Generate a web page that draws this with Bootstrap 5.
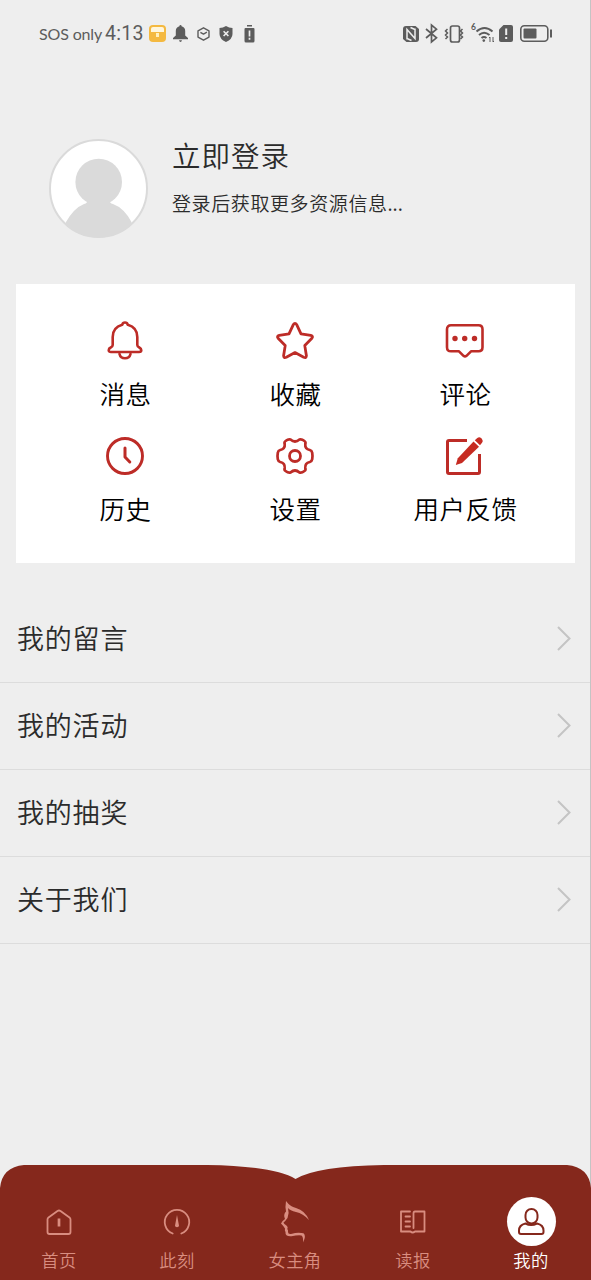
<!DOCTYPE html>
<html lang="zh-CN">
<head>
<meta charset="utf-8">
<meta name="viewport" content="width=device-width, initial-scale=1">
<title>我的</title>
<link href="https://cdn.jsdelivr.net/npm/bootstrap@5.3.0/dist/css/bootstrap.min.css" rel="stylesheet">
<style>
body{background:#eee;font-family:"Noto Sans CJK SC",sans-serif;font-weight:350;color:#2b2b2b}
svg{display:block;flex:none;overflow:visible}
.screen{height:1280px;border-right:1px solid #c4c4c4}
.statusbar{height:67px;padding:0 38px 0 39px;color:#5c5c5c;font-family:Lato,sans-serif;font-weight:400}
.sos{width:66px;font-size:16px;letter-spacing:-.15px}
.clock{width:44px;font-size:19.5px;letter-spacing:.3px;font-family:Roboto,sans-serif}
.profile{height:217px;padding:72px 0 0 49px}
.login-title{font-size:28.5px;letter-spacing:1px;line-height:32px}
.login-sub{font-size:19px;letter-spacing:.6px;line-height:28px;margin-top:18px}
.dots{letter-spacing:-.1px}
.tools{height:279px;margin:0 15px 0 16px;padding:36px 24.5px 0}
.tool{height:115px;color:#000;font-size:25.5px;letter-spacing:.5px;line-height:34px}
.tool svg{margin:0 1px 16px 0;fill:none;stroke:#bd2c27;stroke-width:3;stroke-linejoin:round;stroke-linecap:round}
.menu{margin-top:33px}
.menu-row{height:87px;padding:0 19px 1px 17px;border-bottom:1px solid #dcdcdc;font-size:27px;letter-spacing:.8px}
.menu-row span{padding-bottom:1px}
.tabs{height:115px;position:relative}
.tabs-bg{position:absolute;left:0;top:0}
.tab{position:relative;width:118.2px;padding-top:32px;color:#d98d80;font-size:17.3px;line-height:28px;letter-spacing:.4px}
.tab svg{fill:none;stroke:currentColor;stroke-width:1.8;stroke-linejoin:round;stroke-linecap:round}
.tab-icon{width:49px;height:49px}
.tab.active{color:#fff}
.tab.active svg{color:#85281c;stroke-width:2}
</style>
</head>
<body>
<div class="screen d-flex flex-column">
  <header class="statusbar d-flex align-items-center justify-content-between">
    <div class="d-flex align-items-center">
      <span class="sos text-nowrap">SOS only</span><span class="clock text-nowrap">4:13</span>
      <svg width="17" height="17" viewBox="0 0 17 17"><rect width="17" height="17" rx="4" fill="#f4b940"/><path d="M2 7V4q0-2 2-2h9q2 0 2 2v3z" fill="#fff6dc"/><rect x="7" y="8" width="3" height="4" fill="#fff0bd"/></svg>
      <svg style="margin-left:7px" width="15" height="17" viewBox="0 0 15 17" fill="#5c5c5c"><path d="M6.4 1.2a1.1 1.1 0 0 1 2.2 0Q12.2 2.3 12.2 6v4.4L15 13v1.3H0V13l2.8-2.6V6q0-3.7 3.6-4.8zM6 15.3h3q-.4 1.6-1.5 1.6T6 15.3z"/></svg>
      <svg style="margin-left:9px" width="13" height="14" viewBox="0 0 13 14" fill="none" stroke="#5c5c5c" stroke-width="1.4" stroke-linejoin="round"><path d="M6.5.8 12 3.9v6.2l-5.500 3.100L1 10.100V3.900zM3.400 5.300l3.100 1.800 3.400-1.900"/></svg>
      <svg style="margin-left:9px" width="14" height="16" viewBox="0 0 14 16"><path d="M7 0q3 2 6.500 2v6Q13.500 13 7 16 .5 13 .5 8V2Q4 2 7 0z" fill="#5c5c5c"/><path d="m4.600 5.200 4.800 4.800m0-4.800L4.600 10" stroke="#eee" stroke-width="1.600"/></svg>
      <svg style="margin-left:11px" width="11" height="18" viewBox="0 0 11 18"><path d="M3 0h5v1.500H3zM1.500 3h8Q10.500 3 10.500 4v12q0 1.500-1.500 1.500H2Q.5 17.500.5 16V4q0-1 1-1z" fill="#5c5c5c"/><path d="M5.500 5.500v6m0 1.300v2" stroke="#eee" stroke-width="1.700"/></svg>
    </div>
    <div class="d-flex align-items-center">
      <svg width="16" height="16" viewBox="0 0 16 16"><path d="M3 0h9.500L16 3v10q0 3-3 3H3.500L0 13V3q0-3 3-3z" fill="#5c5c5c"/><path d="M4 13.500V3.500l8 9V2.500M7.500 1.500l4.500 2M8.500 14.500 4 12.500" fill="none" stroke="#eee" stroke-width="1.500"/></svg>
      <svg style="margin-left:6px" width="13" height="19" viewBox="0 0 13 19" fill="none" stroke="#5c5c5c" stroke-width="1.700"><path d="m1 5 10.500 8.800L6.500 18V1l5 4.200L1 14"/></svg>
      <svg style="margin-left:6px" width="22" height="18" viewBox="0 0 22 18" fill="none" stroke="#5c5c5c" stroke-width="1.700"><rect x="6.500" y="1" width="9" height="16" rx="2"/><path d="m3.500 4-2 2 2 2-2 2 2 2-2 2m17-10-2 2 2 2-2 2 2 2-2 2" stroke-width="1.500"/></svg>
      <svg style="margin-left:5px" width="24" height="19" viewBox="0 0 24 19" fill="none" stroke="#5c5c5c" stroke-width="1.900"><path d="M5.500 7.500q8-7 16 0M8 11q5-4.600 10.500 0M10.500 14q2.500-2.200 5 0"/><circle cx="12.800" cy="16.600" r="1.300" fill="#5c5c5c" stroke="none"/><path d="M19 13v5m3-5v5m-4-4 1-1m4 4-1 1" stroke-width="1"/><text x="0" y="6" font-size="8.500" font-weight="700" fill="#5c5c5c" stroke="none">6</text></svg>
      <svg style="margin-left:4px" width="14" height="17" viewBox="0 0 14 17"><path d="M4.500 0H12q2 0 2 2v13q0 2-2 2H2q-2 0-2-2V4.500z" fill="#5c5c5c"/><path d="M7.200 3.500v6.500m0 2v2" stroke="#eee" stroke-width="2"/></svg>
      <svg style="margin-left:7px" width="32" height="17" viewBox="0 0 32 17"><rect x=".8" y=".8" width="27" height="15.400" rx="3.500" fill="none" stroke="#5c5c5c" stroke-width="1.600"/><rect x="3.500" y="3.500" width="13" height="10" rx="1" fill="#5c5c5c"/><path d="M31 4.500v8" stroke="#5c5c5c" stroke-width="2"/></svg>
    </div>
  </header>

  <section class="profile d-flex align-items-start">
    <svg width="99" height="99" viewBox="0 0 99 99"><defs><clipPath id="face"><circle cx="49.500" cy="49.500" r="49"/></clipPath></defs><circle cx="49.500" cy="49.500" r="48.500" fill="#fff" stroke="#dadada" stroke-width="2"/><g fill="#dadada" clip-path="url(#face)"><circle cx="49.700" cy="43" r="23.300"/><path d="M38 61h23q-1 3 3 4 11 4 18.500 18L84 99H14l3-16q8-14 18-18 4-1 3-4z"/></g></svg>
    <div style="margin-left:24px"><div class="login-title">立即登录</div><div class="login-sub">登录后获取更多资源信息<span class="dots">...</span></div></div>
  </section>

  <section class="tools bg-white">
    <div class="row g-0 text-center">
      <div class="col-4 tool d-flex flex-column align-items-center">
        <svg width="40" height="40" viewBox="0 0 40 40"><g stroke-width="2.600"><path d="M7.700 25V17q0-9.500 9.500-12.200Q17.800 2.500 20 2.500t2.800 2.300Q32.300 7.500 32.300 17v8q0 1.500 2 2.500 2 1 2 2.700T34 32H6q-2.300 0-2.300-1.800t2-2.700q2-1 2-2.500z"/><path d="M14.500 34q1 4.300 5.500 4.300t5.500-4.300"/></g></svg>消息</div>
      <div class="col-4 tool d-flex flex-column align-items-center">
        <svg width="40" height="40" viewBox="0 0 40 40"><path d="M18.200 4.800q1.800-2.700 3.600 0l4.200 9 9.800 1.500q2.700.7 1.100 3l-7.100 7.300 1.600 10.200q-.1 2.700-2.700 1.500L20 32.600l-8.700 4.700q-2.600 1.200-2.700-1.500l1.600-10.200-7.100-7.300q-1.600-2.300 1.100-3l9.800-1.500z" stroke-width="2.800"/></svg>收藏</div>
      <div class="col-4 tool d-flex flex-column align-items-center">
        <svg width="40" height="40" viewBox="0 0 40 40"><path d="M6 5.300h27.500q4 0 4 4v18q0 4-4 4H26l-4.500 4.500q-1.500 1.300-3 0L14 31.300H6q-4 0-4-4v-18q0-4 4-4z" stroke-width="2.600"/><g fill="#bd2c27" stroke="none"><circle cx="10" cy="18.500" r="2.700"/><circle cx="19.700" cy="18.500" r="2.700"/><circle cx="29.500" cy="18.500" r="2.700"/></g></svg>评论</div>
      <div class="col-4 tool d-flex flex-column align-items-center">
        <svg width="40" height="40" viewBox="0 0 40 40"><circle cx="20" cy="21" r="17.500" stroke-width="2.900"/><path d="M20 13v9l4.800 5"/></svg>历史</div>
      <div class="col-4 tool d-flex flex-column align-items-center">
        <svg width="40" height="40" viewBox="0 0 40 40"><path d="M15.500 4.500Q20 8.500 24.500 4.500q2-.8 5 1.500 1.500 1 .8 3-.5 5 4.500 6 2 .5 2.400 2.700.6 3.300 0 6.600-.4 2.200-2.400 2.700-5 1-4.500 6 .7 2-.8 3-3 2.300-5 1.500-4.500-4-9 0-2 .8-5-1.500-1.500-1-.8-3 .5-5-4.500-6-2-.5-2.400-2.700-.6-3.300 0-6.600Q3.200 15.500 5.200 15q5-1 4.500-6-.7-2 .8-3 3-2.300 5-1.500z" stroke-width="2.700"/><circle cx="20" cy="21" r="5.500" stroke-width="2.800"/></svg>设置</div>
      <div class="col-4 tool d-flex flex-column align-items-center">
        <svg width="40" height="40" viewBox="0 0 40 40"><path d="M22 5.500H4q-1.500 0-1.500 1.500v30q0 1.500 1.500 1.500h29q1.500 0 1.500-1.500V19" stroke-linecap="butt"/><g fill="#c62b22" stroke="none"><path d="m28.500 6.500 5.500 5.300L17 28l-6.200 2 2-6.700z"/><path d="m29.800 5.300 2.500-2.300q2-1.500 4 .2l.5.500q1.700 2 .2 4l-2 2.500z"/></g></svg>用户反馈</div>
    </div>
  </section>

  <nav class="menu">
    <div class="menu-row d-flex align-items-center justify-content-between"><span>我的留言</span><svg width="14" height="25" viewBox="0 0 14 25"><path d="m1 1 11.500 11.500L1 24" fill="none" stroke="#c4c4c4" stroke-width="2"/></svg></div>
    <div class="menu-row d-flex align-items-center justify-content-between"><span>我的活动</span><svg width="14" height="25" viewBox="0 0 14 25"><path d="m1 1 11.500 11.500L1 24" fill="none" stroke="#c4c4c4" stroke-width="2"/></svg></div>
    <div class="menu-row d-flex align-items-center justify-content-between"><span>我的抽奖</span><svg width="14" height="25" viewBox="0 0 14 25"><path d="m1 1 11.500 11.500L1 24" fill="none" stroke="#c4c4c4" stroke-width="2"/></svg></div>
    <div class="menu-row d-flex align-items-center justify-content-between"><span>关于我们</span><svg width="14" height="25" viewBox="0 0 14 25"><path d="m1 1 11.500 11.500L1 24" fill="none" stroke="#c4c4c4" stroke-width="2"/></svg></div>
  </nav>

  <footer class="tabs d-flex mt-auto">
    <svg class="tabs-bg" width="591" height="115" viewBox="0 0 591 115"><path d="M0 115V23Q2 2 24 0H207Q274 1 295.500 14 317 1 384 0H567q22 2 24 23v92z" fill="#85281c"/></svg>
    <div class="tab d-flex flex-column align-items-center"><div class="tab-icon d-flex align-items-center justify-content-center"><svg width="26" height="26" viewBox="0 0 26 26"><path d="M2.500 8.500 11.500 2q1.500-1 3 0l9 6.500q1 .8 1 2V23q0 2-2 2h-19q-2 0-2-2V10.500q0-1.200 1-2z"/><path d="M13 9.500v8" stroke-width="2.700" stroke-linecap="butt"/></svg></div>首页</div>
    <div class="tab d-flex flex-column align-items-center"><div class="tab-icon d-flex align-items-center justify-content-center"><svg width="26" height="26" viewBox="0 0 26 26"><path d="M8.700 24.500a12.200 12.200 0 1 1 8.600 0"/><path d="m13 6 2 10.500q0 1.700-2 1.700t-2-1.700z" fill="currentColor" stroke="none"/></svg></div>此刻</div>
    <div class="tab d-flex flex-column align-items-center"><div class="tab-icon d-flex align-items-center justify-content-center"><svg width="28" height="42" viewBox="0 0 28 42"><path d="M5 0q4 5.500 10 7 9 2.500 13 12-6-6.500-13-8Q9 9.500 7 7q1.500 5-.5 10-2 3-4 4.500 0 1 3.500 3.500 1.200 1.500.3 3 1.200 1.500.7 3 0 2.500 3 2 7-2.200 12.500-.7 3 2.700-.5 9.200.5-5.500-1.500-7-4-.5-10 .8-6.500.5-6-4.300-1-1.500-.5-3.500-1-2-4-5 1-2.500 4-4.500-2-4.500 1-7.500Q4 6 5 0z" fill="currentColor" stroke="none"/></svg></div>女主角</div>
    <div class="tab d-flex flex-column align-items-center"><div class="tab-icon d-flex align-items-center justify-content-center"><svg width="26" height="24" viewBox="0 0 26 24"><path d="M10 1.500H1v20h9.500q2 2 4.500 0h9.500v-20H15q-1.500 0-1.500 2V18M5.500 6.500H10M5.500 11.500H10M5.500 16.500H10"/></svg></div>读报</div>
    <div class="tab active d-flex flex-column align-items-center"><div class="tab-icon bg-white rounded-circle d-flex align-items-center justify-content-center"><svg width="28" height="28" viewBox="0 0 28 28"><rect x="8.500" y="1" width="12" height="14.500" rx="5.900"/><path d="M8.500 15.500q5.500 3 11.500 0 6.500 1.500 6.500 7v1.500q0 2-2 2H4q-2 0-2-2v-1.500q0-5.500 6.500-7z"/></svg></div>我的</div>
  </footer>
</div>
<script src="https://cdn.jsdelivr.net/npm/bootstrap@5.3.0/dist/js/bootstrap.bundle.min.js"></script>
</body>
</html>
